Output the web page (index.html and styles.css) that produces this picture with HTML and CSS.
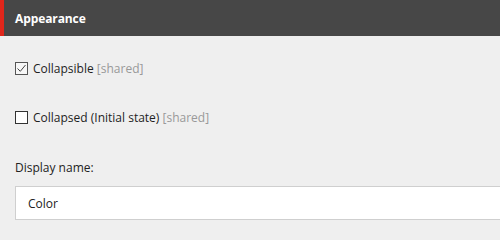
FILE: index.html
```html
<!DOCTYPE html>
<html>
<head>
<meta charset="utf-8">
<link rel="stylesheet" href="styles.css">
</head>
<body>
<div class="panel">
  <div class="header"><span class="title">Appearance</span></div>
  <div class="body">
    <label class="check">
      <span class="box checked"><svg width="11" height="11" viewBox="0 0 11 11"><path d="M1.5 5.5 L4.3 8.3 L9.5 2" fill="none" stroke="#444" stroke-width="1"/></svg></span>
      <span class="label">Collapsible <span class="shared">[shared]</span></span>
    </label>
    <label class="check">
      <span class="box"></span>
      <span class="label">Collapsed (Initial state) <span class="shared">[shared]</span></span>
    </label>
    <div class="field">
      <div class="field-label">Display name:</div>
      <div class="input">Color</div>
    </div>
  </div>
</div>
</body>
</html>
```
FILE: styles.css
```css
html, body {
  margin: 0;
  padding: 0;
  background: #efefef;
}
body {
  font-family: "Open Sans", "Noto Sans", sans-serif;
  font-size: 12px;
  color: #222;
  width: 500px;
  height: 237px;
  overflow: hidden;
}
.header {
  height: 36px;
  background: #474747;
  border-left: 4px solid #e0261b;
  box-sizing: border-box;
  display: flex;
  align-items: center;
  padding-left: 11px;
}
.title {
  color: #fff;
  font-weight: 700;
  font-size: 12px;
  letter-spacing: -0.1px;
}
.body {
  padding: 24px 0 0 15px;
}
.check {
  display: flex;
  align-items: center;
  height: 16px;
  margin-bottom: 33px;
}
.box {
  width: 11px;
  height: 11px;
  border: 1px solid #333;
  background: #fff;
  display: flex;
  align-items: center;
  justify-content: center;
  margin-right: 5px;
}
.box.checked {
  background: #f7f7f7;
  border-color: #555;
}
.label {
  color: #1e1e1e;
}
.shared {
  color: #999;
}
.field {
  padding-top: 2px;
}
.field-label {
  line-height: 16px;
  margin-bottom: 10px;
}
.input {
  height: 32px;
  border: 1px solid #cfcfcf;
  border-right: none;
  background: #fff;
  box-sizing: content-box;
  display: flex;
  align-items: center;
  padding-left: 12px;
  color: #222;
}
```
